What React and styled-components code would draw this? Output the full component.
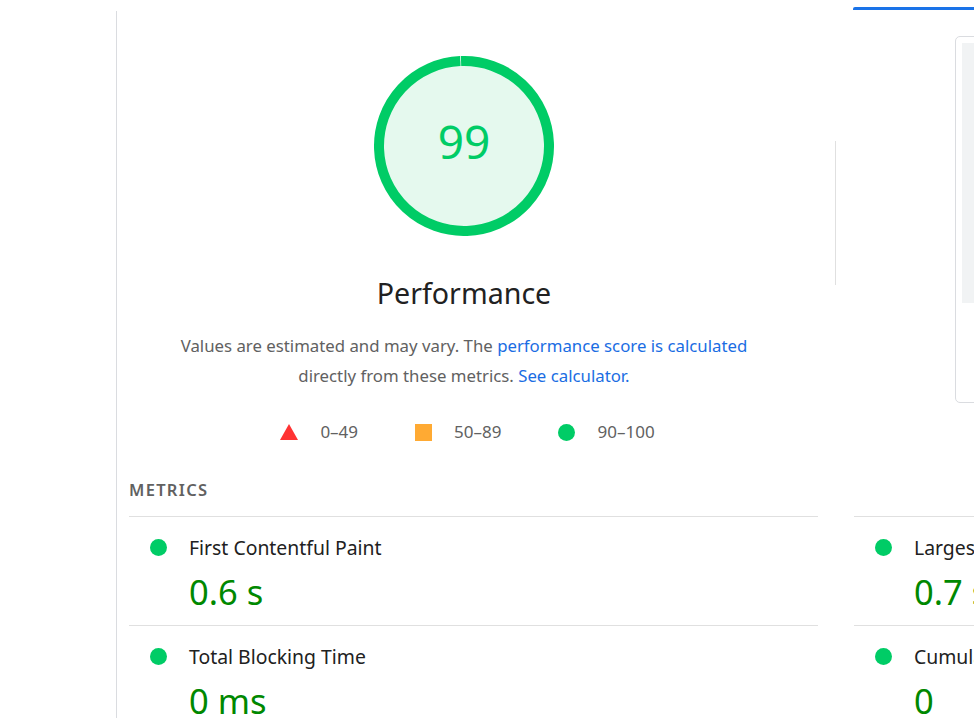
import styled, { createGlobalStyle } from 'styled-components';

const GlobalStyle = createGlobalStyle`
    html, body {
        margin: 0;
        padding: 0;
        background: #ffffff;
        overflow: hidden;
    }
    body {
        font-family: "Noto Sans", "Open Sans", sans-serif;
        color: #212121;
    }
`;

const colors = {
    pass: '#00cc66',
    passFill: '#e5f9ee',
    passText: '#008800',
    average: '#ffaa33',
    fail: '#ff3333',
    muted: '#616161',
    link: '#1a6de3',
    line: '#e0e0e0',
};

const metrics = [
    { label: 'First Contentful Paint', value: '0.6 s' },
    { label: 'Largest Contentful Paint', value: '0.7 s' },
    { label: 'Total Blocking Time', value: '0 ms' },
    { label: 'Cumulative Layout Shift', value: '0' },
];

function Gauge({ score }) {
    const r = 85;
    const circ = 2 * Math.PI * r;
    // nudge the arc so the 1% gap reads as a hairline, as in the report
    const arc = circ * Math.min(score + 0.7, 100) / 100;
    return (
        <GaugeSvg viewBox="0 0 180 180">
            <circle cx="90" cy="90" r={r} fill={colors.passFill} />
            <circle
                cx="90"
                cy="90"
                r={r}
                fill="none"
                stroke={colors.pass}
                strokeWidth="10"
                strokeDasharray={`${arc} ${circ}`}
                transform="rotate(-92 90 90)"
            />
            <text x="90" y="103" textAnchor="middle" fontSize="46" fill={colors.pass}
                  fontFamily='"Noto Sans", "Open Sans", sans-serif'>
                {score}
            </text>
        </GaugeSvg>
    );
}

export default function App() {
    return (
        <>
            <GlobalStyle />
            <Page>
                <Sidebar />
                <Content>
                    <TopRow>
                        <ScoreColumn>
                            <Gauge score={99} />
                            <Title>Performance</Title>
                            <Description>
                                Values are estimated and may vary. The{' '}
                                <Link href="#">performance score is calculated</Link>
                                <br />
                                directly from these metrics. <Link href="#">See calculator.</Link>
                            </Description>
                            <Legend>
                                <LegendItem>
                                    <Triangle />
                                    0–49
                                </LegendItem>
                                <LegendItem>
                                    <Square />
                                    50–89
                                </LegendItem>
                                <LegendItem>
                                    <Dot />
                                    90–100
                                </LegendItem>
                            </Legend>
                        </ScoreColumn>
                        <VerticalRule />
                        <ShotPanel>
                            <TabBar />
                            <ShotCard>
                                <ShotImage />
                            </ShotCard>
                        </ShotPanel>
                    </TopRow>

                    <SectionHeading>Metrics</SectionHeading>
                    <MetricGrid>
                        {metrics.map((m) => (
                            <Metric key={m.label}>
                                <MetricDot />
                                <MetricBody>
                                    <MetricLabel>{m.label}</MetricLabel>
                                    <MetricValue>{m.value}</MetricValue>
                                </MetricBody>
                            </Metric>
                        ))}
                    </MetricGrid>
                </Content>
            </Page>
        </>
    );
}

const Page = styled.div`
    display: flex;
    min-height: 718px;
`;

const Sidebar = styled.div`
    flex: 0 0 116px;
`;

const Content = styled.main`
    flex: 0 0 auto;
    margin-top: 11px;
    border-left: 1px solid #dadce0;
    padding-left: 12px;
    min-height: 707px;
`;

const TopRow = styled.div`
    display: flex;
    align-items: flex-start;
`;

const ScoreColumn = styled.div`
    width: 670px;
    display: flex;
    flex-direction: column;
    align-items: center;
    padding-top: 45px;
`;

const GaugeSvg = styled.svg`
    width: 180px;
    height: 180px;
    display: block;
`;

const Title = styled.h2`
    margin: 39px 0 0;
    font-size: 28.6px;
    line-height: 36px;
    font-weight: 400;
    color: #212121;
`;

const Description = styled.p`
    margin: 20px 0 0;
    font-size: 16.8px;
    line-height: 30px;
    text-align: center;
    color: ${colors.muted};
`;

const Link = styled.a`
    color: ${colors.link};
    text-decoration: none;
`;

const Legend = styled.div`
    display: flex;
    gap: 57px;
    margin-top: 29px;
    margin-left: 7px;
`;

const LegendItem = styled.span`
    display: flex;
    align-items: center;
    gap: 22px;
    font-size: 17px;
    line-height: 24px;
    color: ${colors.muted};
`;

const Triangle = styled.span`
    width: 0;
    height: 0;
    border-left: 9px solid transparent;
    border-right: 9px solid transparent;
    border-bottom: 16px solid ${colors.fail};
`;

const Square = styled.span`
    width: 17px;
    height: 17px;
    background: ${colors.average};
`;

const Dot = styled.span`
    width: 17px;
    height: 17px;
    border-radius: 50%;
    background: ${colors.pass};
`;

const VerticalRule = styled.div`
    width: 1px;
    height: 144px;
    margin: 130px 0 0 36px;
    background: ${colors.line};
`;

const ShotPanel = styled.div`
    margin: -4px 0 0 17px;
    width: 300px;
`;

const TabBar = styled.div`
    height: 3px;
    background: #1a73e8;
    border-top-left-radius: 2px;
`;

const ShotCard = styled.div`
    margin: 26px 0 0 102px;
    height: 353px;
    border: 1px solid #dadce0;
    border-radius: 5px;
    padding: 6px;
`;

const ShotImage = styled.div`
    height: 260px;
    background: #f1f3f4;
`;

const SectionHeading = styled.h3`
    margin: 36px 0 0;
    font-size: 16.5px;
    line-height: 20px;
    font-weight: 600;
    letter-spacing: 1.3px;
    text-transform: uppercase;
    color: ${colors.muted};
`;

const MetricGrid = styled.div`
    display: grid;
    grid-template-columns: 689px 689px;
    column-gap: 36px;
    margin-top: 16px;
`;

const Metric = styled.div`
    display: flex;
    border-top: 1px solid ${colors.line};
    padding: 19px 0 11px 21px;
`;

const MetricDot = styled.span`
    flex: 0 0 17px;
    height: 17px;
    margin-top: 3px;
    border-radius: 50%;
    background: ${colors.pass};
`;

const MetricBody = styled.div`
    margin-left: 22px;
`;

const MetricLabel = styled.div`
    font-size: 19.4px;
    line-height: 24px;
    color: #212121;
`;

const MetricValue = styled.div`
    margin-top: 10px;
    font-size: 34.5px;
    line-height: 44px;
    color: ${colors.passText};
`;
